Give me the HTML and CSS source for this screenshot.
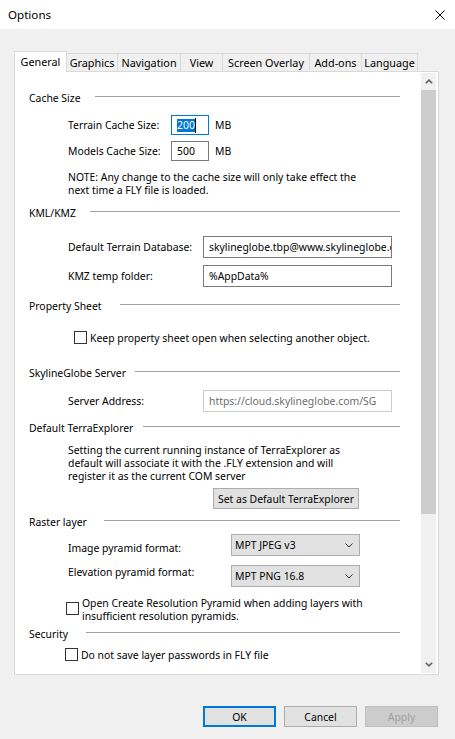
FILE: index.html
```html
<!DOCTYPE html>
<html>
<head>
<meta charset="utf-8">
<link rel="stylesheet" href="styles.css">
</head>
<body>
<div class="window">
  <header class="titlebar">
    <span class="title">Options</span>
    <svg class="close" viewBox="0 0 10 10"><path d="M0.5 0.5 L9.5 9.5 M9.5 0.5 L0.5 9.5" stroke="#000" stroke-width="1" fill="none"/></svg>
  </header>
  <main class="dialog">
    <nav class="tabs">
      <div class="tab active t-general">General</div>
      <div class="tab t-graphics">Graphics</div>
      <div class="tab t-nav">Navigation</div>
      <div class="tab t-view">View</div>
      <div class="tab t-overlay">Screen Overlay</div>
      <div class="tab t-addons">Add-ons</div>
      <div class="tab t-lang">Language</div>
    </nav>
    <div class="panel">
      <div class="content">
        <div class="group-head h-cache mt18"><span>Cache Size</span><i class="rule"></i></div>
        <div class="row mt9">
          <label class="lbl w-cache">Terrain Cache Size:</label>
          <div class="field small focus"><span class="sel">200</span><span class="caret"></span></div>
          <span class="unit">MB</span>
        </div>
        <div class="row mt6">
          <label class="lbl w-cache">Models Cache Size:</label>
          <div class="field small">500</div>
          <span class="unit">MB</span>
        </div>
        <p class="text mt10">NOTE: Any change to the cache size will only take effect the<br>next time a FLY file is loaded.</p>

        <div class="group-head h-kml mt8"><span>KML/KMZ</span><i class="rule"></i></div>
        <div class="row mt15">
          <label class="lbl w-kml">Default Terrain Database:</label>
          <div class="field wide">skylineglobe.tbp@www.skylineglobe.com</div>
        </div>
        <div class="row mt7">
          <label class="lbl w-kml">KMZ temp folder:</label>
          <div class="field wide">%AppData%</div>
        </div>

        <div class="group-head h-prop mt11"><span>Property Sheet</span><i class="rule"></i></div>
        <div class="check-row c1 mt17">
          <span class="check"></span><span>Keep property sheet open when selecting another object.</span>
        </div>

        <div class="group-head h-sg mt21"><span>SkylineGlobe Server</span><i class="rule"></i></div>
        <div class="row mt9">
          <label class="lbl w-kml">Server Address:</label>
          <div class="field wide disabled">https://cloud.skylineglobe.com/SG</div>
        </div>

        <div class="group-head h-te mt8"><span>Default TerraExplorer</span><i class="rule"></i></div>
        <p class="text mt8">Setting the current running instance of TerraExplorer as<br>default will associate it with the .FLY extension and will<br>register it as the current COM server</p>
        <button class="btn set-default mt5">Set as Default TerraExplorer</button>

        <div class="group-head h-raster mt5"><span>Raster layer</span><i class="rule"></i></div>
        <div class="row mt4">
          <label class="lbl w-raster down3">Image pyramid format:</label>
          <div class="combo"><span>MPT JPEG v3</span><svg class="drop" viewBox="0 0 8 5"><path d="M0.5 0.5 L4 4 L7.5 0.5" stroke="#333" stroke-width="1" fill="none"/></svg></div>
        </div>
        <div class="row mt9">
          <label class="lbl w-raster up4">Elevation pyramid format:</label>
          <div class="combo"><span>MPT PNG 16.8</span><svg class="drop" viewBox="0 0 8 5"><path d="M0.5 0.5 L4 4 L7.5 0.5" stroke="#333" stroke-width="1" fill="none"/></svg></div>
        </div>
        <div class="check-row c2 mt10">
          <span class="check"></span><span class="text">Open Create Resolution Pyramid when adding layers with<br>insufficient resolution pyramids.</span>
        </div>

        <div class="group-head h-sec mt3"><span>Security</span><i class="rule"></i></div>
        <div class="check-row c3 mt6">
          <span class="check"></span><span>Do not save layer passwords in FLY file</span>
        </div>
      </div>
      <div class="scrollbar">
        <div class="sb-btn"><svg viewBox="0 0 8 5"><path d="M0.8 4.3 L4 1.2 L7.2 4.3" stroke="#606060" stroke-width="1.6" fill="none"/></svg></div>
        <div class="sb-track"><div class="sb-thumb"></div></div>
        <div class="sb-btn"><svg viewBox="0 0 8 5"><path d="M0.8 0.7 L4 3.8 L7.2 0.7" stroke="#606060" stroke-width="1.6" fill="none"/></svg></div>
      </div>
    </div>
    <div class="actions">
      <button class="btn action default">OK</button>
      <button class="btn action">Cancel</button>
      <button class="btn action disabled">Apply</button>
    </div>
  </main>
</div>
</body>
</html>
```
FILE: styles.css
```css
* { box-sizing: border-box; }
html, body { margin: 0; padding: 0; }
body {
  width: 455px;
  height: 739px;
  overflow: hidden;
  background: #f0f0f0;
  color: #000;
  font-family: "Segoe UI", "Noto Sans", "DejaVu Sans", sans-serif;
  font-size: 10.4px;
}
.window { width: 455px; height: 739px; display: flex; flex-direction: column; }

.titlebar {
  height: 29px;
  background: #fff;
  display: flex;
  align-items: center;
  justify-content: space-between;
  padding: 0 10px 0 8px;
}
.title { font-size: 11.6px; }
.close { width: 10px; height: 10px; display: block; }

.dialog { padding: 22px 16px 0 14px; display: flex; flex-direction: column; }

.tabs { display: flex; align-items: flex-end; height: 20px; }
.tab {
  height: 18px;
  line-height: 17px;
  padding: 0;
  text-align: center;
  white-space: nowrap;
  border: 1px solid #d9d9d9;
  border-bottom: none;
  margin-right: -1px;
  background: #f0f0f0;
  font-size: 10.8px;
}
.tab.active {
  height: 21px;
  line-height: 19px;
  margin-bottom: -1px;
  background: #fff;
  position: relative;
  z-index: 1;
}
.t-general { width: 53px; }
.t-graphics { width: 52px; }
.t-nav { width: 64px; }
.t-view { width: 43px; }
.t-overlay { width: 88px; }
.t-addons { width: 53px; }
.t-lang { width: 57px; }

.panel {
  width: 425px;
  height: 604px;
  border: 1px solid #d9d9d9;
  background: #fff;
  display: flex;
}
.content {
  flex: 1;
  min-width: 0;
  overflow: hidden;
  padding: 0 21px 0 14px;
}

.group-head { display: flex; align-items: center; height: 16px; line-height: 16px; white-space: nowrap; }
.group-head span { flex: none; }
.rule { flex: 1; height: 1px; background: #a0a0a0; margin-bottom: 3px; }
.h-cache span { width: 66px; }
.h-kml span { width: 61px; }
.h-prop span { width: 91px; }
.h-sg span { width: 106px; }
.h-te span { width: 114px; }
.h-raster span { width: 75px; }
.h-sec span { width: 57px; }

.row { display: flex; align-items: center; padding-left: 39px; white-space: nowrap; }
.lbl { flex: none; }
.w-cache { width: 103px; }
.w-kml { width: 135px; }
.w-raster { width: 163px; }
.down3 { margin-top: 6px; }
.up4 { margin-bottom: 8px; }

.field {
  flex: none;
  height: 20px;
  border: 1px solid #7a7a7a;
  background: #fff;
  display: flex;
  align-items: center;
  padding: 0 5px;
  overflow: hidden;
  white-space: nowrap;
}
.field.small { width: 38px; }
.field.focus { border-color: #0078d7; }
.field.wide { width: 189px; height: 22px; padding-left: 5px; padding-right: 2px; }
.field.disabled { border-color: #cccccc; color: #6d6d6d; }
.sel { background: #0078d7; color: #fff; line-height: 13px; }
.caret { width: 1px; height: 15px; background: #000; }
.unit { margin-left: 6px; }

.text { margin: 0; padding-left: 39px; line-height: 13px; }
.check-row .text { padding-left: 0; }

.check-row { display: flex; align-items: center; gap: 3px; white-space: nowrap; }
.check { flex: none; width: 13px; height: 13px; border: 1px solid #333; background: #fff; }
.c1 { padding-left: 45px; height: 13px; }
.c2 { padding-left: 37px; align-items: flex-start; }
.c2 .check { margin-top: 5px; }
.c3 { padding-left: 36px; height: 13px; }

.btn {
  font: inherit;
  color: #000;
  background: #e1e1e1;
  border: 1px solid #adadad;
  height: 21px;
  padding: 0;
  display: block;
}
.set-default { width: 146px; margin-left: 184px; }

.combo {
  flex: none;
  width: 129px;
  height: 22px;
  border: 1px solid #adadad;
  background: #e1e1e1;
  display: flex;
  align-items: center;
  justify-content: space-between;
  padding: 0 6px 0 3px;
}
.drop { width: 8px; height: 5px; display: block; }

.scrollbar {
  width: 15px;
  margin: 1px 2px 1px 0;
  background: #f0f0f0;
  display: flex;
  flex-direction: column;
}
.sb-btn { height: 17px; display: flex; align-items: center; justify-content: center; }
.sb-btn svg { width: 8px; height: 5px; display: block; }
.sb-track { flex: 1; }
.sb-thumb { height: 424px; background: #cdcdcd; }

.actions { display: flex; justify-content: flex-end; gap: 8px; margin-top: 31px; padding-right: 1px; }
.action { width: 73px; }
.action.default { border: 2px solid #0078d7; }
.action.disabled { background: #cccccc; border-color: #bfbfbf; color: #a0a0a0; }

.mt3 { margin-top: 3px; }
.mt4 { margin-top: 4px; }
.mt5 { margin-top: 5px; }
.mt6 { margin-top: 6px; }
.mt7 { margin-top: 7px; }
.mt8 { margin-top: 8px; }
.mt9 { margin-top: 9px; }
.mt10 { margin-top: 10px; }
.mt11 { margin-top: 11px; }
.mt15 { margin-top: 15px; }
.mt17 { margin-top: 17px; }
.mt18 { margin-top: 18px; }
.mt21 { margin-top: 21px; }
```
